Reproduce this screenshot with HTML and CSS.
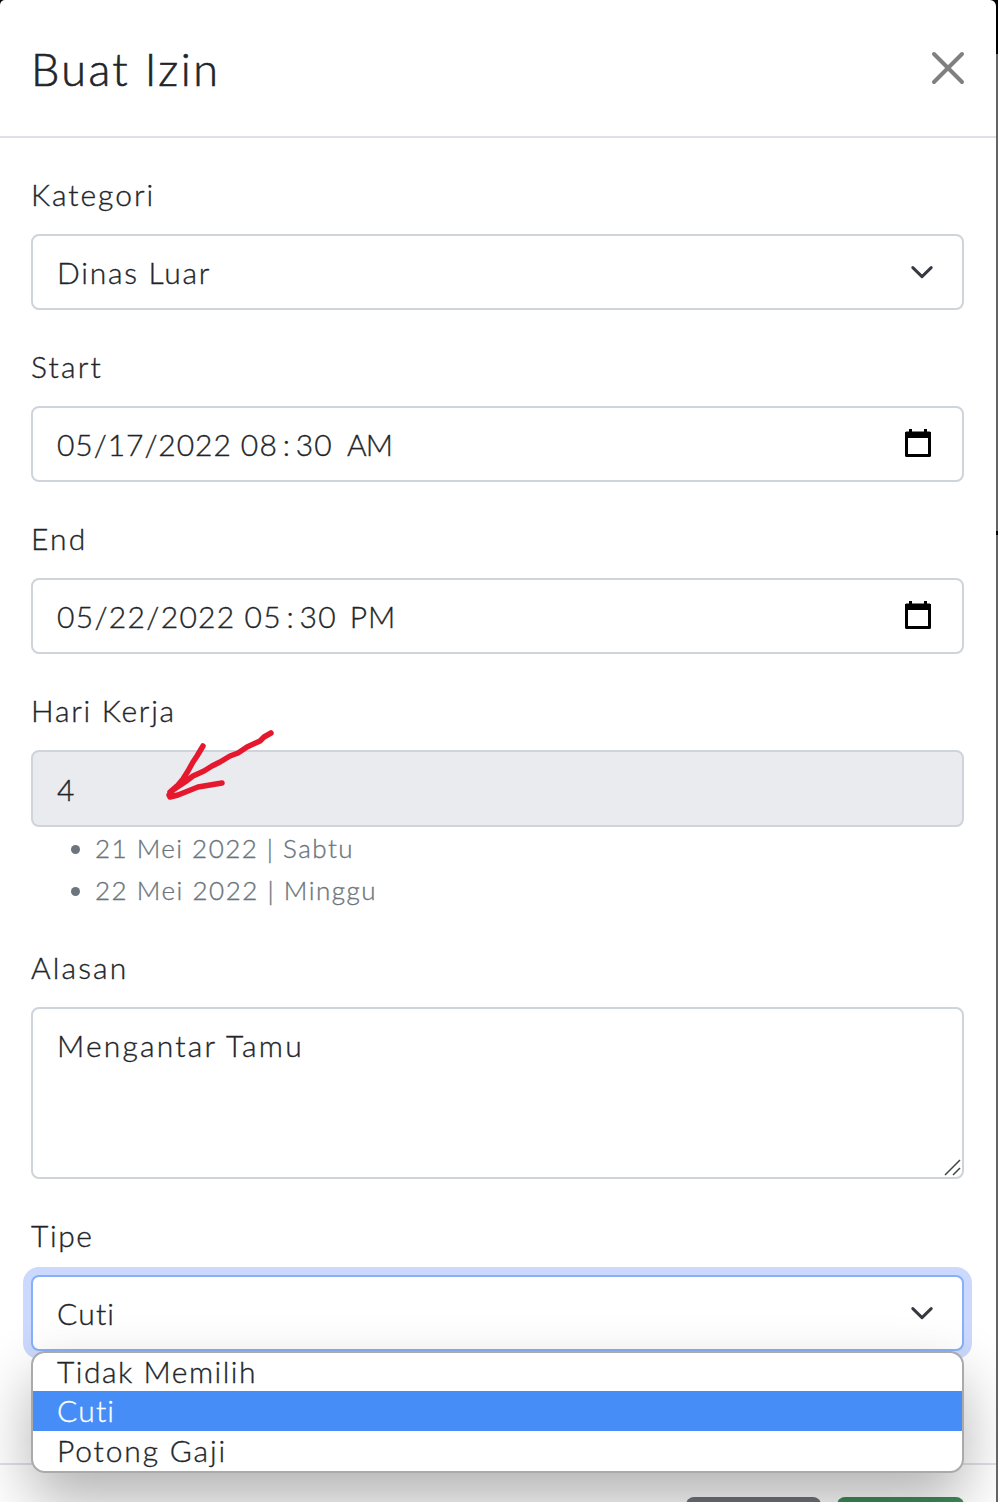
FILE: index.html
```html
<!DOCTYPE html>
<html lang="id">
<head>
<meta charset="utf-8">
<title>Buat Izin</title>
<link rel="stylesheet" href="styles.css">
</head>
<body>
<main class="modal">
  <header class="modal-header">
    <h1 class="title"><span class="t-title">Buat Izin</span></h1>
    <svg class="close" viewBox="0 0 34 34" width="34" height="34"><path d="M3 3L31 31M31 3L3 31"/></svg>
  </header>
  <form class="modal-body">
    <div class="group">
      <div class="label"><span class="t-kategori">Kategori</span></div>
      <div class="field"><span class="t-dinas">Dinas Luar</span><svg class="chevron" viewBox="0 0 24 14" width="24" height="14"><path d="M2.8 2.6L12 11.6L21.2 2.6"/></svg></div>
    </div>
    <div class="group">
      <div class="label"><span class="t-start">Start</span></div>
      <div class="field"><div class="datetime"><span class="t-date1">05/17/2022</span><span class="t-time">08<span class="colon">:</span>30</span><span class="t-am">AM</span></div>
        <svg class="calendar" viewBox="0 0 26 28" width="26" height="28"><path class="frame" d="M1.5 4H24.5V26.5H1.5Z"/><path class="solid" d="M0 4Q0 3 1 3H25Q26 3 26 4V9H0ZM4 0H7V4H4ZM19 0H22V4H19Z"/></svg></div>
    </div>
    <div class="group">
      <div class="label"><span class="t-end">End</span></div>
      <div class="field"><div class="datetime"><span class="t-date2">05/22/2022</span><span class="t-time">05<span class="colon">:</span>30</span><span class="t-pm">PM</span></div>
        <svg class="calendar" viewBox="0 0 26 28" width="26" height="28"><path class="frame" d="M1.5 4H24.5V26.5H1.5Z"/><path class="solid" d="M0 4Q0 3 1 3H25Q26 3 26 4V9H0ZM4 0H7V4H4ZM19 0H22V4H19Z"/></svg></div>
    </div>
    <div class="group">
      <div class="label"><span class="t-hari">Hari Kerja</span></div>
      <div class="field readonly"><span>4</span>
        <svg class="arrow" viewBox="0 0 140 90" width="140" height="90"><path d="M121 13L114 17L110 21L97 27L88 33L80 36L70 42L62 46L54 51L43 56L35 62L23 70L19 75L20 77L28 75L38 71L48 67L60 65L72 63M53 26L47 36L43 42L38 51L33 59L28 65L20 72"/></svg></div>
      <ul class="days"><li><span class="t-sabtu">21 Mei 2022 | Sabtu</span></li><li><span class="t-minggu">22 Mei 2022 | Minggu</span></li></ul>
    </div>
    <div class="group">
      <div class="label"><span class="t-alasan">Alasan</span></div>
      <div class="field area"><span class="t-tamu">Mengantar Tamu</span><svg class="grip" viewBox="0 0 18 18" width="18" height="18"><path d="M1 16L16 1M9 16L16 9"/></svg></div>
    </div>
    <div class="group">
      <div class="label"><span class="t-tipe">Tipe</span></div>
      <div class="field focused"><span class="t-cuti">Cuti</span><svg class="chevron" viewBox="0 0 24 14" width="24" height="14"><path d="M2.8 2.6L12 11.6L21.2 2.6"/></svg>
        <div class="menu">
          <div class="option first"><span class="t-tidak">Tidak Memilih</span></div>
          <div class="option active"><span class="t-cuti">Cuti</span></div>
          <div class="option"><span class="t-potong">Potong Gaji</span></div>
        </div>
      </div>
    </div>
  </form>
  <footer class="modal-footer"><div class="btn cancel"></div><div class="btn save"></div></footer>
</main>
<aside class="backdrop"><div class="bar"></div><div class="mark"></div></aside>
</body>
</html>
```
FILE: styles.css
```css
* { box-sizing: border-box; }
html { height: 100%; overflow: hidden; background: #000; }
body {
  margin: 0;
  height: 1502px;
  overflow: hidden;
  display: flex;
  color: #212529;
  font: 300 30px/48px Lato, "Open Sans", sans-serif;
  -webkit-text-stroke: .35px currentColor;
}
.modal {
  width: 996px;
  flex: none;
  background: #fff;
  border-radius: 5px 6px 0 0;
  display: flex;
  flex-direction: column;
  overflow: hidden;
}
.modal-header {
  height: 138px;
  flex: none;
  border-bottom: 2px solid #dee2e6;
  padding: 0 31px;
  display: flex;
  align-items: center;
  justify-content: space-between;
}
.title { margin: 0; padding-top: 2px; font-size: 45px; font-weight: 300; line-height: 60px; -webkit-text-stroke-width: .6px; }
.close { fill: none; stroke: #808080; stroke-width: 4; stroke-linecap: round; }
.modal-body {
  height: 1325px;
  flex: none;
  padding: 32px 32px 0 31px;
  display: flex;
  flex-direction: column;
  gap: 32px;
}
.label { height: 64px; line-height: 48px; }
.field {
  position: relative;
  height: 76px;
  border: 2px solid #ced4da;
  border-radius: 8px;
  padding: 0 28px 0 24px;
  display: flex;
  align-items: center;
  justify-content: space-between;
  background: #fff;
}
.chevron { fill: none; stroke: #343a40; stroke-width: 3; stroke-linecap: round; stroke-linejoin: round; }
.calendar { margin: -3px 3px 0 0; }
.calendar .frame { fill: none; stroke: #000; stroke-width: 3; stroke-linejoin: round; }
.datetime { display: flex; }
.readonly { height: 77px; background: #e9ebef; }
.arrow { position: absolute; left: 117px; top: -32px; fill: none; stroke: #e5182d; stroke-width: 5.5; stroke-linecap: round; stroke-linejoin: round; }
.days { margin: 0; padding-left: 64px; color: #6c757d; font-size: 26px; line-height: 42px; }
.area { height: 172px; align-items: flex-start; padding-top: 12px; }
.grip { position: absolute; right: 0; bottom: 0; fill: none; stroke: #444; stroke-width: 1.5; }
.focused { border-color: #86b0f8; box-shadow: 0 0 0 8px #cad9fd; }
.menu {
  position: absolute;
  left: -2px;
  top: 74px;
  width: 933px;
  height: 122px;
  border: 2px solid #aaa;
  border-radius: 14px;
  background: #fff;
  box-shadow: 0 28px 60px rgba(0,0,0,.3);
}
.option { height: 40px; line-height: 38px; padding-left: 24px; }
.first { height: 38px; line-height: 37px; }
.active { background: #468df7; color: #fff; }
.modal-footer { height: 100px; border-top: 2px solid #dee2e6; padding: 32px 32px 0; display: flex; justify-content: flex-end; gap: 16px; }
.btn { height: 76px; border-radius: 8px; }
.cancel { width: 135px; background: #70737b; }
.save { width: 127px; background: #3f8b58; }
.backdrop { width: 2px; background: #646464; }
.bar { height: 54px; background: #000; }
.mark { height: 4px; margin-top: 477px; background: #000; }

.t-title { letter-spacing: 2.4px; }
.t-kategori { letter-spacing: 2px; }
.t-dinas { letter-spacing: 1.75px; }
.t-start { letter-spacing: 2.2px; }
.t-end { letter-spacing: 2.2px; }
.t-date1 { letter-spacing: .95px; }
.t-date2 { letter-spacing: 1.33px; }
.t-time { letter-spacing: 1.2px; margin-left: 9px; }
.colon { padding: 0 4.7px; }
.t-am { letter-spacing: -1px; margin-left: 14px; }
.t-pm { letter-spacing: 1px; margin-left: 13px; }
.t-hari { letter-spacing: 1.75px; }
.t-sabtu { letter-spacing: 1.47px; }
.t-minggu { letter-spacing: 1.52px; }
.t-alasan { letter-spacing: 2.15px; }
.t-tamu { letter-spacing: 2.2px; }
.t-tipe { letter-spacing: 1.6px; }
.t-cuti { letter-spacing: 1.2px; }
.t-tidak { letter-spacing: 1.5px; }
.t-potong { letter-spacing: 1.85px; }
```
